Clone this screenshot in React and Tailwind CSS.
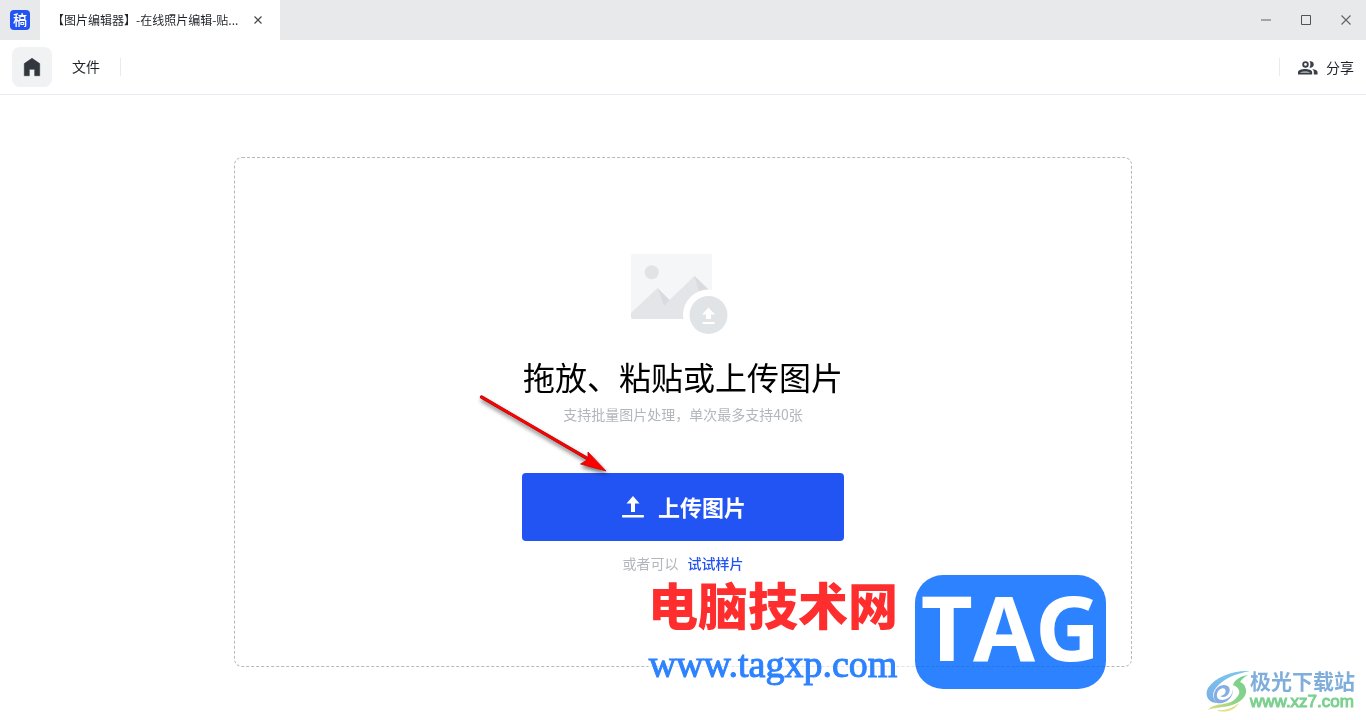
import React from "react";

function TitleBar() {
  return (
    <header className="flex h-10 items-stretch bg-[#e8e9eb]">
      <div className="flex w-10 shrink-0 items-center justify-center">
        <span className="flex size-5 items-center justify-center rounded bg-[#2254f4] pb-0.5 text-sm leading-5 font-medium text-white">稿</span>
      </div>
      <div className="flex w-60 items-center bg-white pr-4 pl-3">
        <span className="text-xs whitespace-nowrap text-[#1f2329]">【图片编辑器】-在线照片编辑-贴...</span>
        <button aria-label="关闭标签页" className="ml-auto flex size-3 items-center justify-center">
          <svg viewBox="0 0 12 12" className="size-3" fill="none" stroke="#45494f" strokeWidth="1.2">
            <path d="M2.5 2.5l7 7M9.5 2.5l-7 7" />
          </svg>
        </button>
      </div>
      <div className="ml-auto flex">
        <button aria-label="最小化" className="flex w-10 items-center justify-center">
          <svg viewBox="0 0 12 12" className="size-3" shapeRendering="crispEdges">
            <path d="M1 5h10v2H1z" fill="#a3a4a6" />
          </svg>
        </button>
        <button aria-label="最大化" className="flex w-10 items-center justify-center">
          <svg viewBox="0 0 12 12" className="size-3" fill="none" stroke="#505256">
            <path d="M1.5 1.5h9v9h-9z" />
          </svg>
        </button>
        <button aria-label="关闭" className="flex w-10 items-center justify-center">
          <svg viewBox="0 0 12 12" className="size-3" fill="none" stroke="#606266" strokeWidth="1.1">
            <path d="M1.5 1.5l9 9M10.5 1.5l-9 9" />
          </svg>
        </button>
      </div>
    </header>
  );
}

function Toolbar() {
  return (
    <nav className="flex h-[55px] items-center border-b border-[#ebecf3] px-3 text-sm text-[#1f2329]">
      <button aria-label="首页" className="flex size-10 items-center justify-center rounded-lg bg-[#f1f2f4]">
        <svg viewBox="0 0 24 24" className="size-6" fill="#33383e">
          <path d="M12 3.300L4.300 8.600V20.700h5v-6.400h5.400v6.400h5V8.600z" stroke="#33383e" strokeWidth="0.6" strokeLinejoin="round" />
        </svg>
      </button>
      <button className="ml-5 pb-0.5">文件</button>
      <span className="ml-5 h-[18px] w-px bg-[#e8eaec]" />
      <span className="ml-auto h-[18px] w-px bg-[#e8eaec]" />
      <button className="ml-[18px] flex items-center gap-2">
        <svg viewBox="0 0 24 24" className="size-5" fill="#3a3f47">
          <path fillRule="evenodd" d="M9 5a3.900 3.900 0 1 1 0 7.800A3.900 3.900 0 0 1 9 5zm0 2.200a1.700 1.700 0 1 0 0 3.400 1.700 1.700 0 0 0 0-3.400z" />
          <path d="M13.800 5.200a3.900 3.900 0 1 1 0 7.400c1.500-2.300 1.500-5.100 0-7.400z" />
          <path d="M0 21v-2.500c0-2.700 4.500-4 8.500-4s8.500 1.300 8.500 4V21z" />
          <path d="M2.500 19.200h12c-.5-1.400-3.400-2.200-6-2.200s-5.500.8-6 2.200z" fill="#a0a3a8" />
          <path d="M17 14.500c3.300.5 6.500 1.700 6.500 4V21H19v-2.500c0-1.600-.4-2.800-2-4z" />
        </svg>
        分享
      </button>
    </nav>
  );
}

function Placeholder() {
  return (
    <svg viewBox="0 0 98 82" className="h-[82px] w-[98px]" aria-hidden="true">
      <rect x="1" y="0" width="81" height="65" rx="1.500" fill="#f5f6f8" />
      <circle cx="21.700" cy="18.300" r="7" fill="#e1e4e7" />
      <path d="M1 59L27.500 34 39.500 46 64.500 22 82 39V65H3Q1 65 1 63z" fill="#e4e5e9" />
      <path d="M27.500 34L39.500 46 34 52z" fill="#d9dbdf" />
      <path d="M64.500 22L82 39 70 41z" fill="#d9dbdf" />
      <circle cx="78.500" cy="61" r="25.500" fill="#fff" />
      <circle cx="78.500" cy="61" r="19" fill="#e1e4e7" />
      <path d="M78.500 53.500L85 60.500H81V65H76V60.500H72z" fill="#fff" />
      <path d="M72.500 68h12v2h-12z" fill="#fff" />
    </svg>
  );
}

function Arrow() {
  return (
    <svg
      viewBox="0 0 136 90"
      className="pointer-events-none absolute top-[232px] right-1/2 mr-[69px] h-[90px] w-[136px] drop-shadow-[1px_3px_2px_rgba(0,0,0,0.55)]"
      aria-hidden="true"
    >
      <path d="M3.500 7L111 69.500" stroke="#8b1010" strokeWidth="3.200" strokeLinecap="round" />
      <path d="M3.500 7L111 69.500" stroke="#fe0000" strokeWidth="2.600" strokeLinecap="round" />
      <path d="M110 62L128 81 102.500 74 110 69.500z" fill="#fe0000" stroke="#c00808" strokeWidth="0.800" />
    </svg>
  );
}

function SiteBanner() {
  return (
    <div className="pointer-events-none absolute -bottom-[25px] left-1/2 -ml-[35px] flex items-center gap-[17px] bg-white/60">
      <div className="flex flex-col items-center whitespace-nowrap">
        <span className="text-[50px] leading-[60px] font-extrabold text-[#ff2e2e]">电脑技术网</span>
        <span className="pt-1 font-['Liberation_Serif',serif] text-[38px] leading-[54px] text-[#2d82ff] [-webkit-text-stroke:1px_#2d82ff]">www.tagxp.com</span>
      </div>
      <div className="relative flex h-[114px] w-[191px] items-center justify-center">
        <span className="absolute inset-0 rounded-[28px] bg-[#2d82ff] mix-blend-multiply" />
        <span className="relative pb-3 font-['Open_Sans',sans-serif] text-[90px] leading-[110px] font-bold text-white">TAG</span>
      </div>
    </div>
  );
}

function DownloadMark() {
  return (
    <div className="pointer-events-none absolute right-[11px] bottom-[7px] flex items-center">
      <svg viewBox="0 0 44 42" className="h-[42px] w-[44px]" aria-hidden="true">
        <defs>
          <linearGradient id="swoosh" x1="0" y1="0" x2="0" y2="1">
            <stop offset="0" stopColor="#7cc4ee" />
            <stop offset="1" stopColor="#7aaee6" />
          </linearGradient>
          <linearGradient id="leaf" x1="0" y1="1" x2="1" y2="0">
            <stop offset="0" stopColor="#e8dc7c" />
            <stop offset="0.45" stopColor="#8ed488" />
            <stop offset="1" stopColor="#72cf91" />
          </linearGradient>
        </defs>
        <path d="M44 1C27 0 9 7 2 18C-2 26 3 33 11 33C6 28 6 23 10 18C17 9 28 4 44 1z" fill="url(#swoosh)" />
        <path d="M11 33C4 26 10 15 18 15C23 15 25 19 23 23C21 27 17 28 14 26C18 26 21 22 19 19C17 17 12 19 11 24C10 30 16 31 20 29C25 27 27 23 26 19C29 26 20 35 11 33z" fill="#86aee2" />
        <path d="M42 5C35 6 28 10 27 15C34 18 35 23 31 27C27 33 18 34 11 35C7 36 4 37 2 40C9 37 16 38 23 36C34 33 41 27 40 20C39 15 37 13 34 12C36 9 38 7 42 5z" fill="url(#leaf)" />
        <path d="M12 40C20 41 28 37 33 33C29 40 21 43 12 41z" fill="#e5df85" />
      </svg>
      <div className="flex flex-col whitespace-nowrap">
        <span className="text-[21px] leading-[22px] font-bold text-[#7faedb]">极光下载站</span>
        <span className="font-['Liberation_Sans',sans-serif] text-[17px] leading-[22px] text-[#7bd08f] [-webkit-text-stroke:1px_#7bd08f]">www.xz7.com</span>
      </div>
    </div>
  );
}

export default function App() {
  return (
    <div className="relative flex min-h-screen flex-col overflow-hidden bg-white font-['Noto_Sans_CJK_SC',sans-serif]">
      <TitleBar />
      <Toolbar />
      <main className="flex flex-1 flex-col items-center px-6 pt-[62px] pb-[53px]">
        <section className="relative flex w-full max-w-[898px] flex-col items-center rounded-lg border border-dashed border-[#b4b8bf] pt-24 pb-[93px]">
          <div className="pr-2">
            <Placeholder />
          </div>
          <h1 className="mt-4 text-[32px] leading-[48px] font-normal text-black">拖放、粘贴或上传图片</h1>
          <p className="mt-1 text-sm text-[#b2b7bd]">支持批量图片处理，单次最多支持40张</p>
          <button className="mt-[49px] flex h-[68px] w-[322px] items-center justify-center gap-3 rounded bg-[#2254f4] pb-0.5 text-[22px] font-bold text-white">
            <svg viewBox="0 0 26 26" className="size-[26px]" fill="#fff">
              <path d="M13 3L19.500 10.500H15V19H11V10.500H6.500z" />
              <rect x="2" y="22" width="22" height="2.600" rx="0.800" />
            </svg>
            上传图片
          </button>
          <p className="mt-3 flex gap-[9px] text-sm text-[#b2b7bd]">
            或者可以
            <a href="#samples" className="font-medium text-[#2254f4]">试试样片</a>
          </p>
          <Arrow />
          <SiteBanner />
        </section>
      </main>
      <DownloadMark />
    </div>
  );
}
